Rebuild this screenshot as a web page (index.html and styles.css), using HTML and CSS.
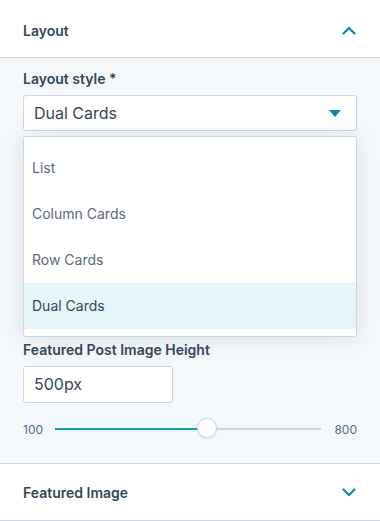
FILE: index.html
```html
<!DOCTYPE html>
<html lang="en">
<head>
    <meta charset="UTF-8">
    <meta name="viewport" content="width=device-width, initial-scale=1.0">
    <title>Layout settings</title>
    <link rel="stylesheet" href="styles.css">
</head>
<body>
    <div class="panel">
        <div class="section-head">
            <span class="section-title">Layout</span>
            <svg class="chevron" width="14" height="9" viewBox="0 0 14 9"><path d="M1.5 7.5 L7 2 L12.5 7.5" fill="none" stroke="#0091ae" stroke-width="2.2" stroke-linecap="round" stroke-linejoin="round"/></svg>
        </div>

        <div class="section-body">
            <div class="field-label">Layout style *</div>
            <div class="select-wrap">
                <div class="select">
                    <span>Dual Cards</span>
                    <svg class="caret" width="12" height="7" viewBox="0 0 12 7"><path d="M0 0 H12 L6 7 Z" fill="#0091ae"/></svg>
                </div>
                <ul class="dropdown">
                    <li>List</li>
                    <li>Column Cards</li>
                    <li>Row Cards</li>
                    <li class="selected">Dual Cards</li>
                </ul>
            </div>

            <div class="field-label">Featured Post Image Height</div>
            <div class="text-input">500px</div>

            <div class="slider-row">
                <span class="slider-value">100</span>
                <div class="slider">
                    <div class="slider-fill" style="width: 57%"></div>
                    <div class="slider-thumb" style="left: 57%"></div>
                </div>
                <span class="slider-value">800</span>
            </div>
        </div>

        <div class="section-head closed">
            <span class="section-title">Featured Image</span>
            <svg class="chevron" width="14" height="9" viewBox="0 0 14 9"><path d="M1.5 1.5 L7 7 L12.5 1.5" fill="none" stroke="#0091ae" stroke-width="2.2" stroke-linecap="round" stroke-linejoin="round"/></svg>
        </div>
    </div>
</body>
</html>
```

FILE: styles.css
```css
body {
    margin: 0;
    font-family: 'Inter', sans-serif;
    color: #33475b;
    background: #fff;
}

.panel {
    width: 380px;
    height: 521px;
    overflow: hidden;
}

.section-head {
    display: flex;
    justify-content: space-between;
    align-items: center;
    height: 58px;
    padding: 3px 24px 0 23px;
    background: #fff;
    border-bottom: 1px solid #cbd6e2;
    box-sizing: border-box;
}

.section-head.closed {
    height: 57px;
    padding-top: 1px;
}

.section-title {
    font-size: 14px;
    font-weight: 600;
}

.section-body {
    background: #f5f8fa;
    padding: 12px 23px 0 23px;
    height: 406px;
    box-sizing: border-box;
    border-bottom: 1px solid #cbd6e2;
}

.field-label {
    font-size: 14px;
    font-weight: 600;
    line-height: 18px;
}

.select-wrap {
    position: relative;
    margin-top: 7px;
    margin-bottom: 4px;
}

.select {
    display: flex;
    justify-content: space-between;
    align-items: center;
    height: 36px;
    padding: 0 15px 0 10px;
    background: #fff;
    border: 1px solid #cbd6e2;
    border-radius: 3px;
    font-size: 16px;
    box-sizing: border-box;
}

.dropdown {
    list-style: none;
    margin: 5px 0 0 0;
    padding: 8px 0 7px 0;
    background: #fff;
    border: 1px solid #cbd6e2;
    border-radius: 3px;
    box-shadow: 0 1px 24px rgba(45, 62, 80, 0.12);
}

.dropdown li {
    height: 46px;
    line-height: 46px;
    padding-left: 8px;
    font-size: 14px;
    color: #5b6b7b;
}

.dropdown li.selected {
    background: #e5f5f8;
    color: #33475b;
}

.text-input {
    margin-top: 7px;
    width: 150px;
    height: 37px;
    line-height: 35px;
    padding-left: 10px;
    background: #fff;
    border: 1px solid #cbd6e2;
    border-radius: 3px;
    font-size: 16px;
    box-sizing: border-box;
}

.slider-row {
    display: flex;
    align-items: center;
    margin-top: 16px;
    height: 20px;
}

.slider-value {
    font-size: 12px;
    color: #516f90;
}

.slider {
    position: relative;
    flex: 1;
    height: 2px;
    margin: 0 13px 0 12px;
    background: #cbd6e2;
}

.slider-fill {
    height: 2px;
    background: #00a4bd;
}

.slider-thumb {
    position: absolute;
    top: -10px;
    width: 20px;
    height: 20px;
    margin-left: -10px;
    background: #fff;
    border: 1px solid #cbd6e2;
    border-radius: 50%;
    box-sizing: border-box;
    box-shadow: 0 1px 3px rgba(0, 0, 0, 0.1);
}
```
